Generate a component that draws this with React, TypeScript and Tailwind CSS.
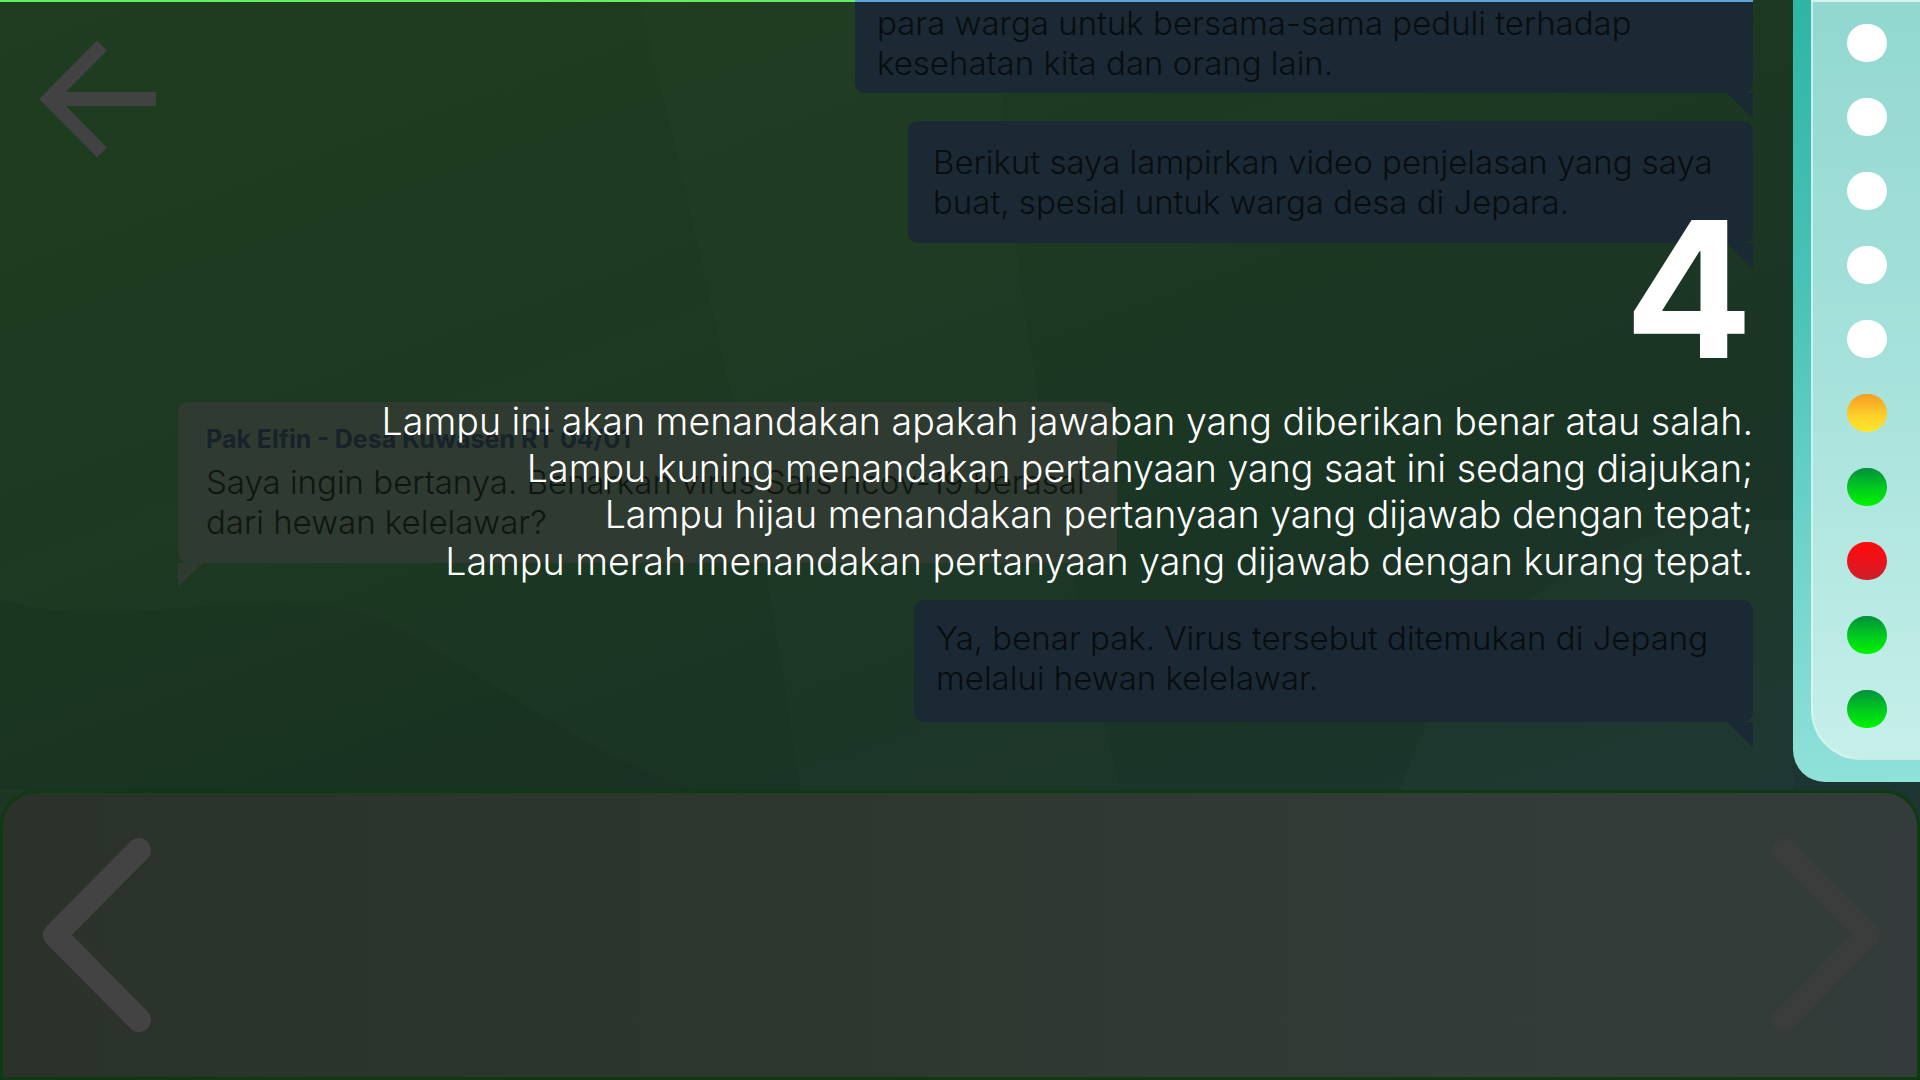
import React from 'react'

const lamps = ['white', 'white', 'white', 'white', 'white', 'yellow', 'green', 'red', 'green', 'green']

const lampStyle: Record<string, string> = {
  white: 'bg-white',
  yellow: 'bg-[linear-gradient(180deg,#f59c24_0%,#fcd22a_60%,#fde62c_100%)]',
  green: 'bg-[linear-gradient(180deg,#00903d_0%,#00d21a_60%,#00f400_100%)]',
  red: 'bg-[linear-gradient(180deg,#ff0a0a_0%,#e8141c_55%,#cd202b_100%)]',
}

function BackArrow() {
  return (
    <svg width="116" height="116" viewBox="0 0 116 116" fill="none">
      <path d="M62 4.5 L9 58 L62 111.5" stroke="#424242" strokeWidth="14" strokeLinejoin="miter" />
      <path d="M12 58 H116" stroke="#424242" strokeWidth="14" />
    </svg>
  )
}

function Chevron({ dir, color }: { dir: 'left' | 'right'; color: string }) {
  const d = dir === 'left' ? 'M96 12 L12 97 L96 182' : 'M12 12 L96 97 L12 182'
  return (
    <svg width="108" height="194" viewBox="0 0 108 194" fill="none">
      <path d={d} stroke={color} strokeWidth="24" strokeLinecap="round" strokeLinejoin="round" />
    </svg>
  )
}

function RightBubble({ className, children }: { className: string; children: React.ReactNode }) {
  return (
    <div className={'relative self-end rounded-[10px] bg-[#1b2935] text-[33px] leading-[40px] font-light text-[#080d10] ' + className}>
      {children}
      <div className="absolute top-full right-0 h-[25px] w-[26px] bg-[#1b2935] [clip-path:polygon(0_0,100%_0,100%_100%)]" />
    </div>
  )
}

export default function App() {
  return (
    <div className="relative h-[1080px] w-[1920px] overflow-hidden bg-[linear-gradient(160deg,#1f3d20_0%,#1d3a21_30%,#1a3425_60%,#1c3530_80%,#26393a_100%)] font-['Inter','Liberation_Sans',sans-serif]">
      {/* soft background shapes */}
      <svg className="pointer-events-none absolute inset-0" width="1920" height="1080" viewBox="0 0 1920 1080">
        <path d="M640 0 C700 250 760 500 800 790 L1120 790 C1060 520 1000 260 1000 0 Z" fill="#ffffff" opacity="0.012" />
        <path d="M0 880 C200 820 330 760 420 920 C470 1000 500 1060 520 1080 L0 1080 Z" fill="#000000" opacity="0.04" />
        <path d="M0 600 C150 640 300 560 420 640 C520 700 600 760 700 790 L0 790 Z" fill="#000000" opacity="0.05" />
        <path d="M1400 790 C1450 640 1550 560 1700 520 L1793 520 L1793 790 Z" fill="#ffffff" opacity="0.015" />
      </svg>

      <div className="relative flex h-[790px]">
        <div className="w-[178px] shrink-0 pl-[40px] pt-[41px]">
          <BackArrow />
        </div>

        <div className="flex min-w-0 flex-1 flex-col pr-[40px]">
          <RightBubble className="mt-[-18px] w-[898px] pt-[21px] pb-[10px] pl-[22px]">
            <p>para warga untuk bersama-sama peduli terhadap</p>
            <p>kesehatan kita dan orang lain.</p>
          </RightBubble>

          <RightBubble className="mt-[28px] w-[845px] pt-[21px] pb-[21px] pl-[25px]">
            <p>Berikut saya lampirkan video penjelasan yang saya</p>
            <p>buat, spesial untuk warga desa di Jepara.</p>
          </RightBubble>

          <div className="relative mt-[159px] w-[939px] rounded-[10px] bg-[#2f3a30] pt-[22px] pb-[21px] pl-[28px]">
            <p className="text-[25px] leading-[30px] font-bold text-[#17222a]">Pak Elfin - Desa Kuwasen RT 04/01</p>
            <p className="mt-[8px] text-[33px] leading-[40px] font-light text-[#10160f]">
              Saya ingin bertanya. Benarkan virus Sars ncov-19 berasal
              <br />
              dari hewan kelelawar?
            </p>
            <div className="absolute top-full left-0 h-[24px] w-[25px] bg-[#2f3a30] [clip-path:polygon(0_0,100%_0,0_100%)]" />
          </div>

          <RightBubble className="mt-[37px] w-[839px] pt-[18px] pb-[24px] pl-[22px]">
            <p>Ya, benar pak. Virus tersebut ditemukan di Jepang</p>
            <p>melalui hewan kelelawar.</p>
          </RightBubble>
        </div>

        <aside className="h-[782px] w-[127px] shrink-0 rounded-bl-[32px] bg-[linear-gradient(180deg,#2db5a5_0%,#4cc4b8_40%,#74d6cd_75%,#8fe1d9_100%)]">
          <div className="ml-[18px] h-[760px] rounded-bl-[50px] border-t-2 border-b-2 border-l-2 border-[#dff6f2]/70 bg-[linear-gradient(180deg,#92d8d0_0%,#a6e2db_50%,#c6efea_100%)]">
            <div className="flex flex-col items-center gap-[36px] pt-[22px]">
              {lamps.map((c, i) => (
                <div key={i} className={'h-[38px] w-[40px] rounded-full ' + lampStyle[c]} />
              ))}
            </div>
          </div>
        </aside>
      </div>

      {/* bottom navigation panel */}
      <div className="relative flex h-[290px] items-center justify-between rounded-t-[36px] border-[3px] border-[#0f3a11] bg-[linear-gradient(90deg,#2a3229_0%,#2e372f_45%,#333b38_75%,#343c3b_100%)] pr-[37px] pl-[40px]">
        <Chevron dir="left" color="#434343" />
        <Chevron dir="right" color="#3b3c3c" />
      </div>

      {/* top highlight lines */}
      <div className="absolute top-0 left-0 h-[2px] w-[855px] bg-[#62f062]" />
      <div className="absolute top-0 left-[855px] h-[2px] w-[898px] bg-[#5ba6dc]" />

      {/* tutorial tooltip */}
      <div className="absolute top-[194px] right-[167px] flex flex-col items-end text-white">
        <div className="text-[190px] leading-none font-bold">4</div>
        <div className="mt-[15px] text-right text-[37.6px] leading-[46.5px] font-light">
          <p>Lampu ini akan menandakan apakah jawaban yang diberikan benar atau salah.</p>
          <p>Lampu kuning menandakan pertanyaan yang saat ini sedang diajukan;</p>
          <p>Lampu hijau menandakan pertanyaan yang dijawab dengan tepat;</p>
          <p>Lampu merah menandakan pertanyaan yang dijawab dengan kurang tepat.</p>
        </div>
      </div>
    </div>
  )
}
